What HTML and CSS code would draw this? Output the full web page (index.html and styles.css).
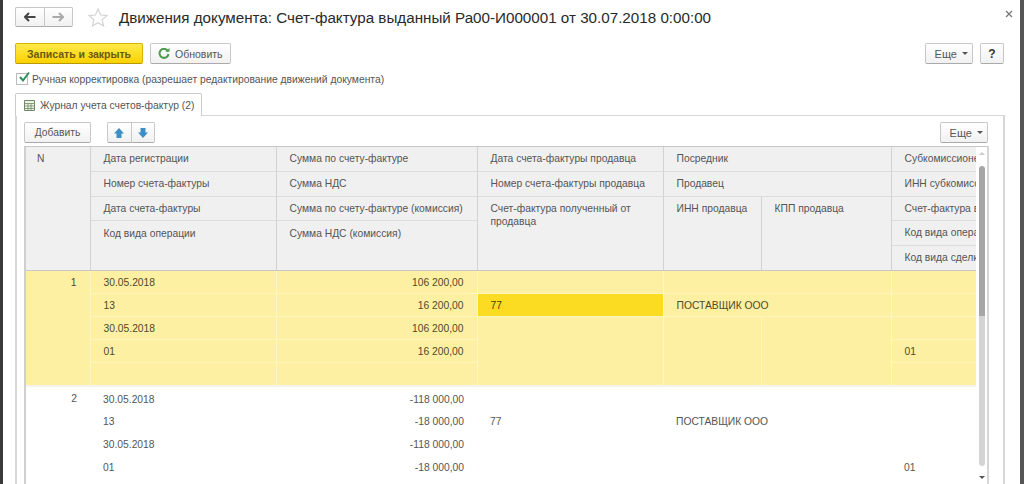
FILE: index.html
```html
<!DOCTYPE html>
<html>
<head>
    <meta charset="utf-8">
    <title>Движения документа</title>
    <link rel="stylesheet" href="styles.css">
</head>
<body>
<div class="window">
    <!-- Title -->
    <div class="title-row">
        <div class="btn-group nav-group">
            <button class="btn icon-btn">
                <svg width="12" height="10" viewBox="0 0 12 10"><path d="M5 1 1 5l4 4M1 5h10.5" fill="none" stroke="#444" stroke-width="2"/></svg>
            </button>
            <button class="btn icon-btn">
                <svg width="12" height="10" viewBox="0 0 12 10"><path d="M7 1l4 4-4 4M11 5H.5" fill="none" stroke="#aaa" stroke-width="2"/></svg>
            </button>
        </div>
        <svg class="star" width="20" height="19" viewBox="0 0 20 19"><path d="M10 1l2.6 6 6.4.6-4.900 4.200 1.500 6.200L10 14.700 4.400 18l1.500-6.200L1 7.600 7.400 7z" fill="#fff" stroke="#d4d4d4" stroke-width="1.200"/></svg>
        <h1 class="title">Движения документа: Счет-фактура выданный Ра00-И000001 от 30.07.2018 0:00:00</h1>
        <svg class="close" width="8" height="8" viewBox="0 0 8 8"><path d="M1 1l6 6M7 1 1 7" stroke="#777" stroke-width="1.300"/></svg>
    </div>

    <!-- Command bar -->
    <div class="toolbar">
        <button class="btn btn-primary">Записать и закрыть</button>
        <button class="btn btn-refresh">
            <svg width="12" height="12" viewBox="0 0 12 12"><path d="M10 3.200A4.500 4.500 0 1 0 10.500 6" fill="none" stroke="#4c9a4c" stroke-width="2"/><path d="M7.500 3.800h4V0z" fill="#4c9a4c"/></svg>
            Обновить
        </button>
        <div class="spacer"></div>
        <button class="btn btn-more">Еще <span class="caret"></span></button>
        <button class="btn btn-help">?</button>
    </div>

    <label class="check-row">
        <span class="checkbox">
            <svg width="14" height="13" viewBox="0 0 14 13"><path d="M3 6l3 3.500L12 1.500" fill="none" stroke="#2f8f5b" stroke-width="2"/></svg>
        </span>
        Ручная корректировка (разрешает редактирование движений документа)
    </label>

    <!-- Tabs -->
    <div class="tabs">
        <div class="tab">
            <svg width="11" height="11" viewBox="0 0 11 11"><path d="M.5.5h10v10H.5z" fill="#eef3e6" stroke="#6f8a66"/><path d="M.5 3.500h10M.5 6h10M.5 8.500h10M4 3.500v7M7 3.500v7" stroke="#6f8a66" stroke-width=".8"/></svg>
            Журнал учета счетов-фактур (2)
        </div>
    </div>

    <div class="panel">
        <div class="panel-toolbar">
            <button class="btn btn-add">Добавить</button>
            <div class="btn-group move-group">
                <button class="btn icon-btn">
                    <svg width="12" height="12" viewBox="0 0 12 12"><path d="M6 1l5 5.500H8.500V11h-5V6.500H1z" fill="#3d8fc4"/></svg>
                </button>
                <button class="btn icon-btn">
                    <svg width="12" height="12" viewBox="0 0 12 12"><path d="M6 11 1 5.500h2.500V1h5v4.500H11z" fill="#3d8fc4"/></svg>
                </button>
            </div>
            <div class="spacer"></div>
            <button class="btn btn-more">Еще <span class="caret"></span></button>
        </div>

        <div class="grid-box">
            <div class="grid-clip">
                <table class="grid">
                    <colgroup>
                        <col class="c-n"><col class="c-a"><col class="c-b"><col class="c-c"><col class="c-d"><col class="c-e"><col class="c-f">
                    </colgroup>
                    <thead>
                        <tr class="h-24">
                            <th rowspan="5" class="head-n">N</th>
                            <th>Дата регистрации</th>
                            <th>Сумма по счету-фактуре</th>
                            <th>Дата счета-фактуры продавца</th>
                            <th colspan="2">Посредник</th>
                            <th>Субкомиссионер</th>
                        </tr>
                        <tr class="h-25">
                            <th>Номер счета-фактуры</th>
                            <th>Сумма НДС</th>
                            <th>Номер счета-фактуры продавца</th>
                            <th colspan="2">Продавец</th>
                            <th>ИНН субкомиссионера</th>
                        </tr>
                        <tr class="h-24">
                            <th>Дата счета-фактуры</th>
                            <th>Сумма по счету-фактуре (комиссия)</th>
                            <th rowspan="3">Счет-фактура полученный от продавца</th>
                            <th rowspan="3">ИНН продавца</th>
                            <th rowspan="3">КПП продавца</th>
                            <th>Счет-фактура выданный</th>
                        </tr>
                        <tr class="h-25">
                            <th rowspan="2" class="head-low">Код вида операции</th>
                            <th rowspan="2" class="head-low">Сумма НДС (комиссия)</th>
                            <th>Код вида операции</th>
                        </tr>
                        <tr class="h-25">
                            <th>Код вида сделки</th>
                        </tr>
                    </thead>
                    <tbody class="row-current">
                        <tr>
                            <td rowspan="5" class="num row-no">1</td>
                            <td>30.05.2018</td><td class="num">106 200,00</td><td></td><td colspan="2"></td><td></td>
                        </tr>
                        <tr>
                            <td>13</td><td class="num">16 200,00</td><td class="cell-active">77</td><td colspan="2">ПОСТАВЩИК ООО</td><td></td>
                        </tr>
                        <tr>
                            <td>30.05.2018</td><td class="num">106 200,00</td><td rowspan="3"></td><td rowspan="3"></td><td rowspan="3"></td><td></td>
                        </tr>
                        <tr>
                            <td>01</td><td class="num">16 200,00</td><td>01</td>
                        </tr>
                        <tr class="row-last">
                            <td></td><td></td><td></td>
                        </tr>
                    </tbody>
                    <tbody>
                        <tr>
                            <td rowspan="5" class="num row-no">2</td>
                            <td>30.05.2018</td><td class="num">-118 000,00</td><td></td><td colspan="2"></td><td></td>
                        </tr>
                        <tr>
                            <td>13</td><td class="num">-18 000,00</td><td>77</td><td colspan="2">ПОСТАВЩИК ООО</td><td></td>
                        </tr>
                        <tr>
                            <td>30.05.2018</td><td class="num">-118 000,00</td><td rowspan="3"></td><td rowspan="3"></td><td rowspan="3"></td><td></td>
                        </tr>
                        <tr>
                            <td>01</td><td class="num">-18 000,00</td><td>01</td>
                        </tr>
                        <tr>
                            <td></td><td></td><td></td>
                        </tr>
                    </tbody>
                </table>
            </div>
            <div class="scrollbar">
                <span class="arrow-up"></span>
                <div class="thumb"></div>
                <span class="arrow-down"></span>
            </div>
        </div>
    </div>
</div>
</body>
</html>
```

FILE: styles.css
```css
/* Page and window frame */
html, body {
    margin: 0;
    height: 484px;
    overflow: hidden;
    background: #fff;
}

body, button, table {
    font-family: "Liberation Sans", Arial, sans-serif;
    font-size: 10.3px;
    color: #555;
}

.window {
    box-sizing: border-box;
    height: 484px;
    overflow: hidden;
    border-left: 3px solid #3a3a3a;
    border-right: 4px solid #555;
    padding: 7px 15px 0 12px;
}

.spacer {
    flex: 1;
}

/* Buttons */
.btn {
    box-sizing: border-box;
    height: 21px;
    padding: 0;
    border: 1px solid #c8c8c8;
    border-bottom-color: #aaa;
    border-radius: 2px;
    background: linear-gradient(#fff, #f1f1f1);
    color: #555;
    white-space: nowrap;
}

.btn-group {
    display: flex;
}

.icon-btn {
    display: flex;
    align-items: center;
    justify-content: center;
    flex: 1;
}

.btn-group .icon-btn:first-child {
    border-right: none;
    border-radius: 2px 0 0 2px;
}

.btn-group .icon-btn:last-child {
    border-radius: 0 2px 2px 0;
}

.btn-primary {
    width: 128px;
    border-color: #d8b400;
    border-bottom-color: #b89a00;
    background: linear-gradient(#ffe94a, #fbd100);
    color: #6a5a10;
    font-weight: bold;
    font-size: 10.5px;
}

.btn-refresh {
    display: flex;
    align-items: center;
    justify-content: flex-start;
    gap: 5px;
    width: 81px;
    margin-left: 7px;
    padding-left: 7px;
    font-size: 10.5px;
}

.btn-more {
    display: flex;
    align-items: center;
    justify-content: flex-end;
    gap: 5px;
    width: 48px;
    padding-right: 4px;
    font-size: 11px;
}

.caret {
    display: block;
    border: 3px solid transparent;
    border-top-color: #555;
    border-bottom: none;
}

.btn-help {
    width: 24px;
    margin-left: 7px;
    color: #333;
    font-weight: bold;
    font-size: 12px;
}

/* Title */
.title-row {
    display: flex;
    align-items: center;
    height: 20px;
}

.nav-group {
    width: 58px;
    height: 20px;
}

.nav-group .btn {
    height: 20px;
}

.star {
    margin-left: 15px;
}

.title {
    flex: 1;
    margin: 1px 0 0 11px;
    font-size: 15.2px;
    font-weight: normal;
    color: #2a2a2a;
    white-space: nowrap;
}

.close {
    margin: -6px -8px 0 0;
}

.toolbar {
    display: flex;
    align-items: center;
    margin-top: 16px;
    padding-right: 1px;
}

/* Manual edit checkbox */
.check-row {
    display: flex;
    align-items: center;
    gap: 4px;
    height: 14px;
    margin-top: 8px;
    padding-left: 1px;
}

.checkbox {
    box-sizing: border-box;
    display: block;
    width: 12px;
    height: 12px;
    border: 1px solid #bbb;
    background: #fff;
}

.checkbox svg {
    display: block;
    margin: -3px 0 0 0;
}

/* Tabs */
.tabs {
    display: flex;
    margin-top: 7px;
}

.tab {
    box-sizing: border-box;
    display: flex;
    align-items: center;
    gap: 5px;
    width: 187px;
    height: 23px;
    margin-bottom: -1px;
    padding-left: 8px;
    border: 1px solid #ccc;
    border-bottom: none;
    border-radius: 2px 2px 0 0;
    background: #fff;
    position: relative;
}

.panel {
    height: 380px;
    padding: 6px 14px 0 7px;
    border: solid #d6d6d6;
    border-width: 1px 2px 0 2px;
}

.panel-toolbar {
    display: flex;
    align-items: center;
    padding-right: 1px;
}

.btn-add {
    width: 67px;
}

.move-group {
    width: 48px;
    height: 21px;
    margin-left: 16px;
}

/* Table */
.grid-box {
    display: flex;
    height: 340px;
    margin-top: 3px;
    border: 1px solid #c6c6c6;
    border-left: 2px solid #cfcfcf;
    border-right: 2px solid #d6d6d6;
    border-bottom: none;
}

.grid-clip {
    flex: 1;
    overflow: hidden;
}

.grid {
    table-layout: fixed;
    width: 999px;
    border-collapse: collapse;
}

.c-n { width: 64px; }
.c-a { width: 186px; }
.c-b { width: 201px; }
.c-c { width: 186px; }
.c-d { width: 98px; }
.c-e { width: 130px; }
.c-f { width: 134px; }

.grid th {
    padding: 5px 13px 0;
    box-sizing: border-box;
    vertical-align: top;
    background: #f0f0f0;
    border-right: 1px solid #d2d2d2;
    border-bottom: 1px solid #dcdcdc;
    font-weight: normal;
    text-align: left;
    line-height: 13px;
    white-space: nowrap;
    overflow: hidden;
}

.grid .h-24 th {
    height: 24px;
}

.grid .h-25 th {
    height: 25px;
}

.grid th[rowspan="3"] {
    white-space: normal;
}

.grid th.head-low {
    padding-top: 6px;
}

.grid thead tr:last-child th,
.grid th[rowspan] {
    border-bottom-color: #c8c8c8;
}

.grid th.head-n {
    padding-left: 11px;
}

.grid td {
    box-sizing: border-box;
    height: 23px;
    padding: 2px 13px 0;
    white-space: nowrap;
    vertical-align: middle;
}

.grid td.num {
    text-align: right;
}

.grid td.row-no {
    vertical-align: top;
    padding: 6px 13px 0 0;
}

.row-current td {
    background: #fdf0a2;
    color: #4f4a2a;
    border-right: 1px solid #fff6c4;
    border-bottom: 1px solid #fef5bd;
}

.row-current .row-last td {
    height: 24px;
}

.row-current tr:last-child td,
.row-current td[rowspan] {
    border-bottom: 2px solid #f4f4ea;
}

.row-current td.cell-active {
    background: #fbdc22;
    color: #4a4210;
}

/* Scrollbar */
.scrollbar {
    position: relative;
    flex: none;
    width: 11px;
    background: #fff;
}

.arrow-up,
.arrow-down {
    position: absolute;
    left: 3px;
    border: 3px solid transparent;
}

.arrow-up {
    top: 5px;
    border-bottom-color: #ccc;
    border-top: none;
}

.arrow-down {
    bottom: 8px;
    border-top-color: #555;
    border-bottom: none;
}

.thumb {
    position: absolute;
    top: 19px;
    bottom: 21px;
    left: 3px;
    width: 6px;
    border-radius: 3px;
    background: linear-gradient(#a6a6a6 0, #a6a6a6 50%, #d4d4d4 50%);
}
```
